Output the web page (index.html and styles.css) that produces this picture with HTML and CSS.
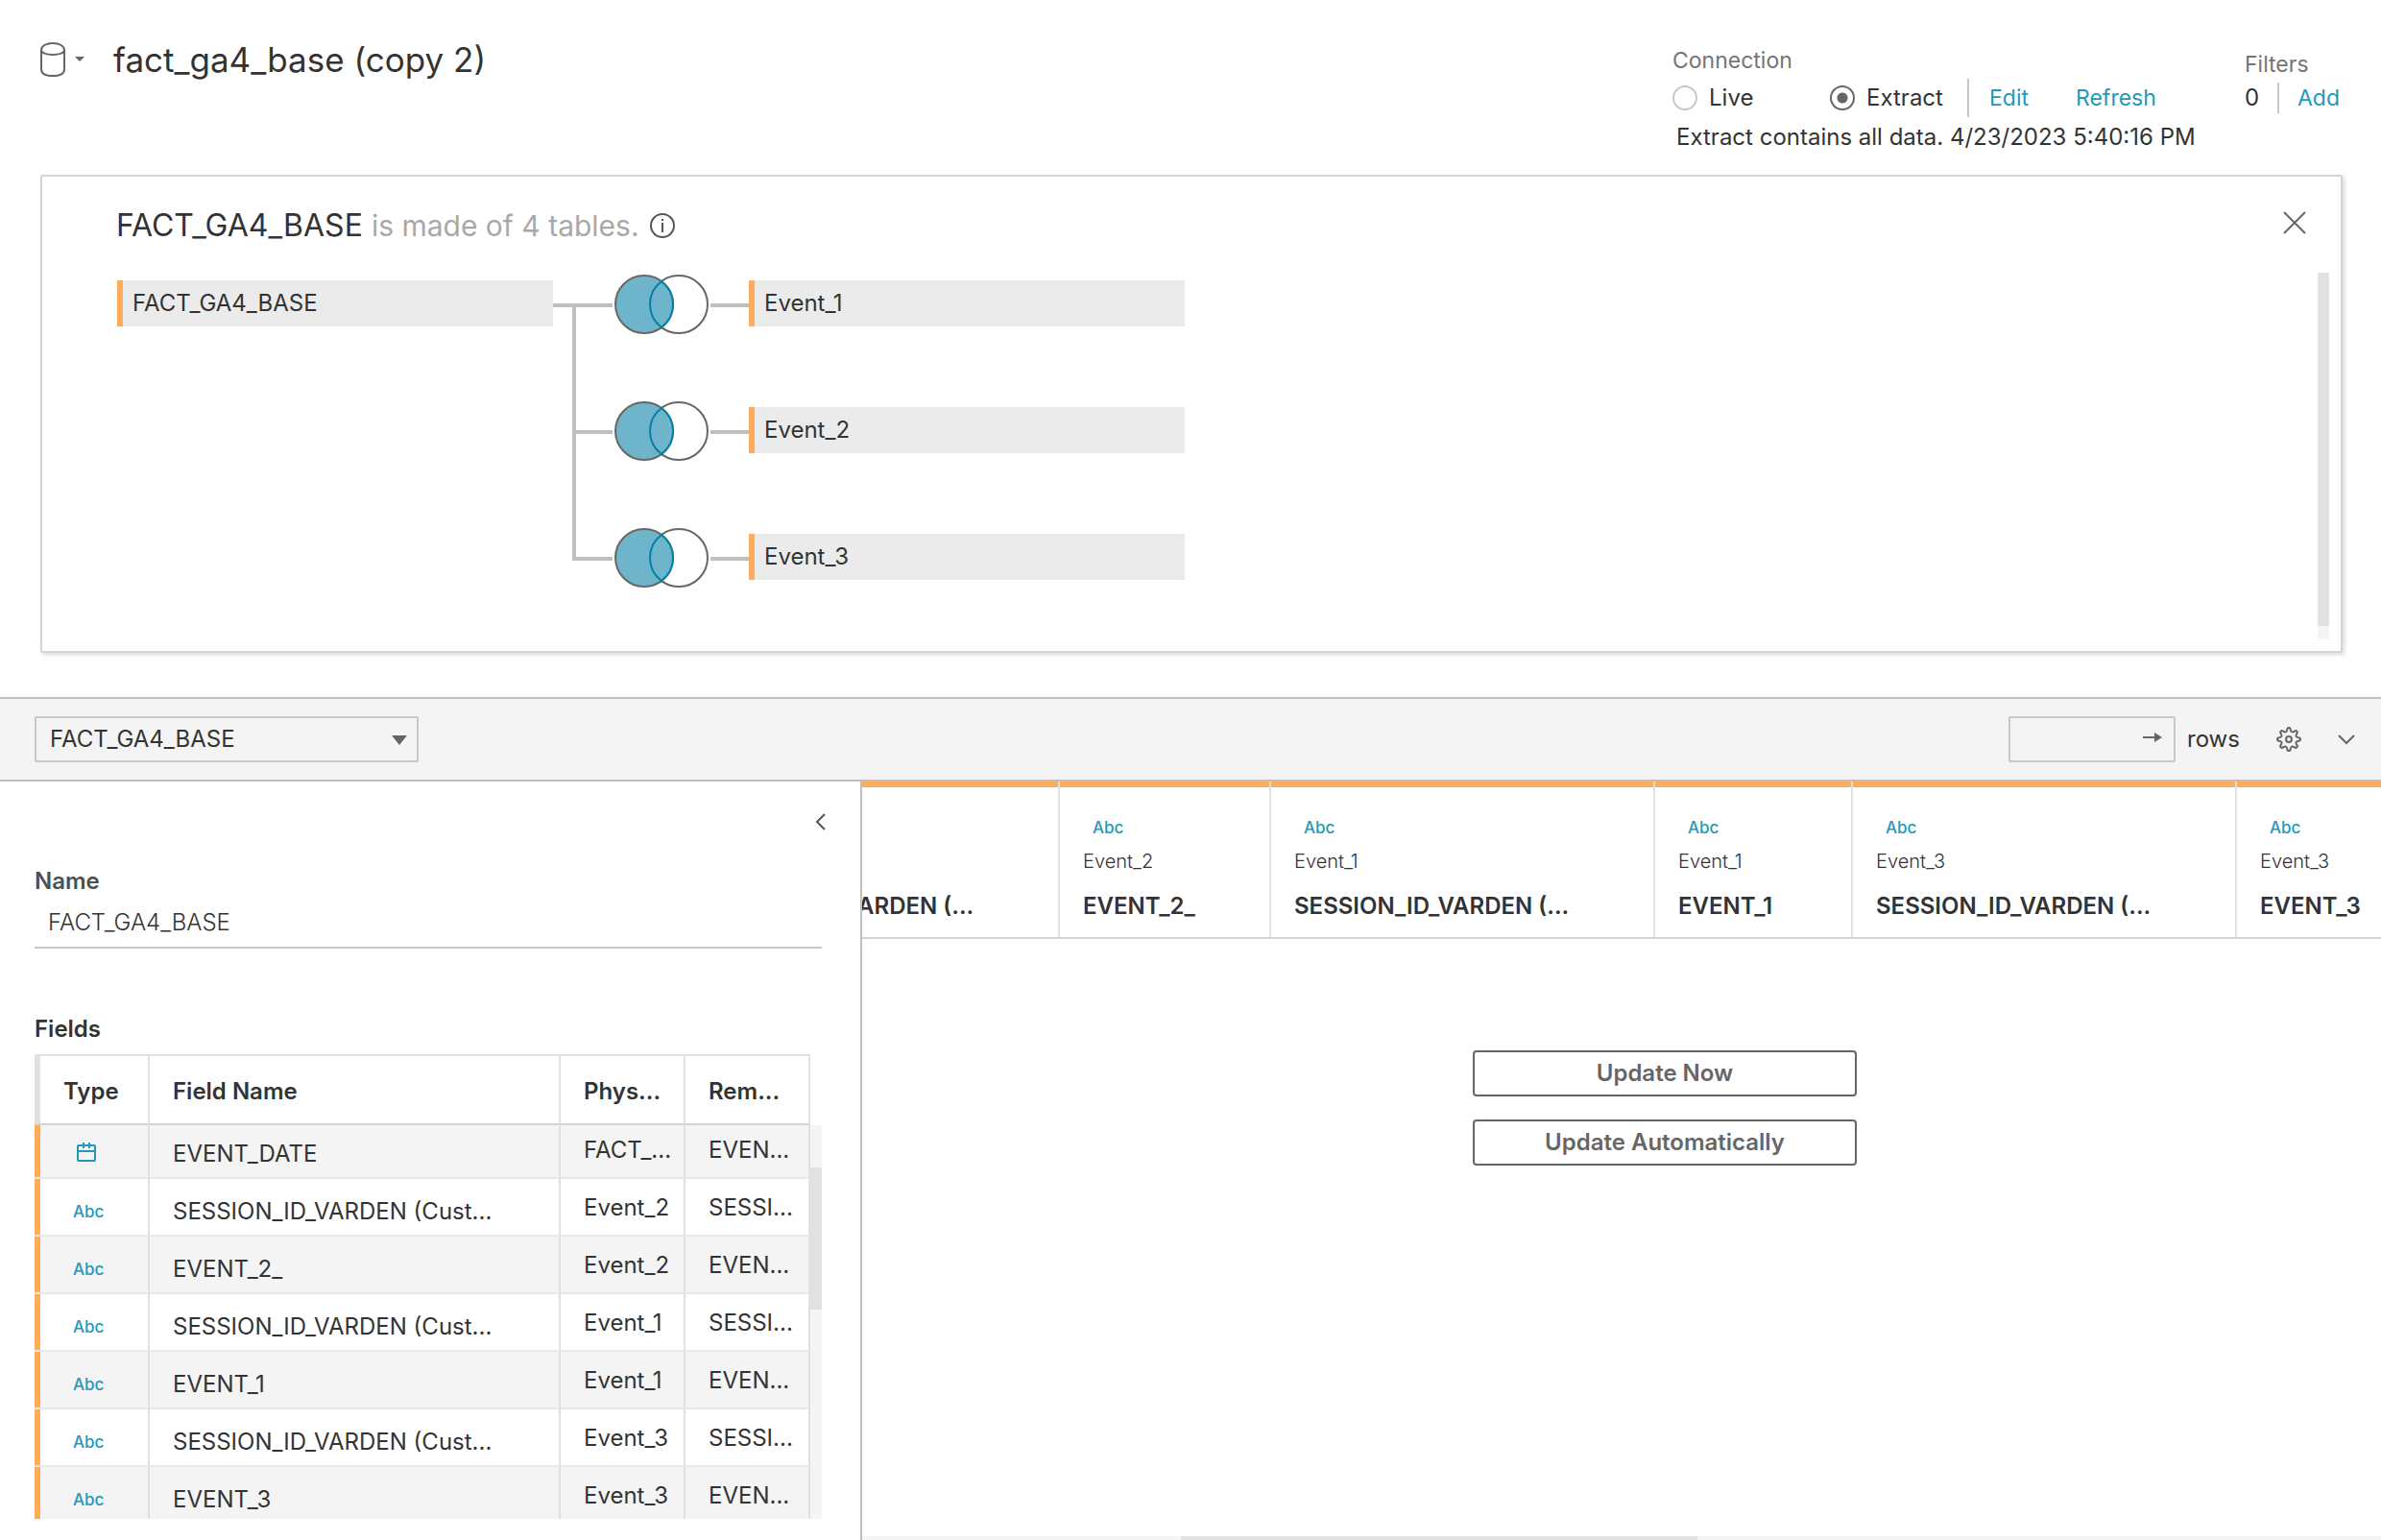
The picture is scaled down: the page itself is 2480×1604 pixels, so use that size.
FILE: index.html
```html
<!DOCTYPE html>
<html lang="en">
<head>
<meta charset="utf-8">
<meta name="viewport" content="width=device-width, initial-scale=1">
<title>fact_ga4_base (copy 2)</title>
<link rel="stylesheet" href="styles.css">
</head>
<body>
<header class="header">
  <button class="source-menu" type="button" aria-label="Data source menu">
    <svg width="48" height="36" viewBox="0 0 48 36" fill="none" stroke="#666" stroke-width="2">
      <path d="M1 8C1 4 6 1 13 1s12 3 12 7v20c0 4-3 7-12 7S1 32 1 28z"/>
      <path d="M1 8c0 3 5 5 12 5s12-2 12-5"/>
      <path d="M36 15h10l-5 5z" fill="#666" stroke="none"/>
    </svg>
  </button>
  <h1 class="title">fact_ga4_base (copy 2)</h1>

  <section class="connection">
    <h2 class="meta-label">Connection</h2>
    <div class="connection-row">
      <label class="mode mode-live"><input type="radio" name="mode" class="radio">Live</label>
      <label class="mode mode-extract"><input type="radio" name="mode" class="radio" checked>Extract</label>
      <span class="divider"></span>
      <a href="#" class="link link-edit">Edit</a>
      <a href="#" class="link">Refresh</a>
    </div>
    <p class="extract-note">Extract contains all data. 4/23/2023 5:40:16 PM</p>
  </section>

  <section class="filters">
    <h2 class="meta-label">Filters</h2>
    <div class="filters-row">
      <span>0</span>
      <span class="divider divider-short"></span>
      <a href="#" class="link">Add</a>
    </div>
  </section>
</header>

<section class="join-panel">
  <div class="join-head">
    <h2 class="join-title">FACT_GA4_BASE <span class="muted">is made of 4 tables.</span></h2>
    <svg class="info" width="28" height="28" viewBox="0 0 28 28" fill="none" stroke="#555" stroke-width="2">
      <circle cx="14" cy="14" r="12"/>
      <path d="M14 11v10M14 7v2"/>
    </svg>
    <button class="close" type="button" aria-label="Close">
      <svg width="24" height="24" viewBox="0 0 24 24" stroke="#666" stroke-width="2"><path d="M1 1l22 22M23 1L1 23"/></svg>
    </button>
  </div>
  <div class="join-body">
    <div class="node">FACT_GA4_BASE</div>
    <svg class="joins" width="204" height="312" viewBox="0 0 204 312">
      <g stroke="#bfbfbf" stroke-width="4" fill="none">
        <path d="M0 26h62M22 24v268M20 158h42M20 290h42M164 26h40M164 158h40M164 290h40"/>
      </g>
      <g id="venn">
        <circle cx="131" cy="25" r="30" fill="#fff" stroke="#666" stroke-width="2"/>
        <circle cx="95" cy="25" r="30" fill="#6eb5cb" stroke="#666" stroke-width="2"/>
        <path d="M113 1a30 30 0 0 1 0 48a30 30 0 0 1 0-48z" fill="#6eb5cb" stroke="#0080a3" stroke-width="2"/>
      </g>
      <use href="#venn" y="132"/>
      <use href="#venn" y="264"/>
    </svg>
    <div class="joined">
      <div class="node">Event_1</div>
      <div class="node">Event_2</div>
      <div class="node">Event_3</div>
    </div>
    <div class="vscroll"><div class="vscroll-thumb"></div></div>
  </div>
</section>

<div class="toolbar">
  <div class="select-wrap">
    <select class="table-select" aria-label="Table"><option>FACT_GA4_BASE</option></select>
    <svg class="select-caret" width="16" height="10" viewBox="0 0 16 10"><path d="M0 0h16l-8 10z" fill="#666"/></svg>
  </div>
  <div class="rows-wrap">
    <input class="rows-input" id="rows" type="text">
    <svg class="rows-arrow" width="20" height="12" viewBox="0 0 20 12"><path d="M0 5h12V1l8 5-8 5V7H0z" fill="#666"/></svg>
  </div>
  <label class="rows-label" for="rows">rows</label>
  <button class="icon-button gear" type="button" aria-label="Settings">
    <svg width="26" height="26" viewBox="0 0 26 26" fill="none" stroke="#666" stroke-width="2" stroke-linejoin="round">
      <path d="M11.3 2.8A1.7 1.7 0 0 1 14.7 2.8Q15.4 7.2 19 4.6A1.7 1.7 0 0 1 21.4 7Q18.8 10.6 23.2 11.3A1.7 1.7 0 0 1 23.2 14.7Q18.8 15.4 21.4 19A1.7 1.7 0 0 1 19 21.4Q15.4 18.8 14.7 23.2A1.7 1.7 0 0 1 11.3 23.2Q10.6 18.8 7 21.4A1.7 1.7 0 0 1 4.6 19Q7.2 15.4 2.8 14.7A1.7 1.7 0 0 1 2.8 11.3Q7.2 10.6 4.6 7A1.7 1.7 0 0 1 7 4.6Q10.6 7.2 11.3 2.8z"/>
      <circle cx="13" cy="13" r="3"/>
    </svg>
  </button>
  <button class="icon-button" type="button" aria-label="Collapse">
    <svg width="18" height="11" viewBox="0 0 18 11" fill="none" stroke="#666" stroke-width="2"><path d="M1 1l8 8 8-8"/></svg>
  </button>
</div>

<main class="main">
  <aside class="details">
    <button class="collapse" type="button" aria-label="Hide details">
      <svg width="12" height="18" viewBox="0 0 12 18" fill="none" stroke="#555" stroke-width="2"><path d="M11 1L3 9l8 8"/></svg>
    </button>
    <label class="details-label name-label" for="table-name">Name</label>
    <input class="name-input" id="table-name" type="text" value="FACT_GA4_BASE">
    <h3 class="details-label">Fields</h3>
    <div class="fields">
      <table class="fields-table">
        <colgroup><col class="c-type"><col class="c-name"><col class="c-phys"><col class="c-rem"></colgroup>
        <thead><tr><th>Type</th><th>Field Name</th><th>Phys...</th><th>Rem...</th></tr></thead>
        <tbody>
          <tr class="scrolled"><td class="type"><svg class="cal" width="20" height="20" viewBox="0 0 20 20" fill="none" stroke="#2399b9" stroke-width="2"><rect x="1" y="3" width="18" height="16" rx="1"/><path d="M1 9h18M7 0v6M13 0v6"/></svg></td><td class="fname">EVENT_DATE</td><td>FACT_...</td><td>EVEN...</td></tr>
          <tr><td class="type">Abc</td><td class="fname">SESSION_ID_VARDEN (Cust...</td><td>Event_2</td><td>SESSI...</td></tr>
          <tr><td class="type">Abc</td><td class="fname">EVENT_2_</td><td>Event_2</td><td>EVEN...</td></tr>
          <tr><td class="type">Abc</td><td class="fname">SESSION_ID_VARDEN (Cust...</td><td>Event_1</td><td>SESSI...</td></tr>
          <tr><td class="type">Abc</td><td class="fname">EVENT_1</td><td>Event_1</td><td>EVEN...</td></tr>
          <tr><td class="type">Abc</td><td class="fname">SESSION_ID_VARDEN (Cust...</td><td>Event_3</td><td>SESSI...</td></tr>
          <tr><td class="type">Abc</td><td class="fname">EVENT_3</td><td>Event_3</td><td>EVEN...</td></tr>
        </tbody>
      </table>
      <div class="fields-scroll"><div class="fields-thumb"></div></div>
    </div>
  </aside>

  <section class="preview">
    <table class="preview-table">
      <colgroup><col class="wide"><col class="mid"><col class="wide"><col class="narrow"><col class="wide"><col class="narrow"></colgroup>
      <thead>
        <tr>
          <th><span class="column">SESSION_ID_VARDEN (...</span></th>
          <th><span class="abc">Abc</span><span class="source">Event_2</span><span class="column">EVENT_2_</span></th>
          <th><span class="abc">Abc</span><span class="source">Event_1</span><span class="column">SESSION_ID_VARDEN (...</span></th>
          <th><span class="abc">Abc</span><span class="source">Event_1</span><span class="column">EVENT_1</span></th>
          <th><span class="abc">Abc</span><span class="source">Event_3</span><span class="column">SESSION_ID_VARDEN (...</span></th>
          <th><span class="abc">Abc</span><span class="source">Event_3</span><span class="column">EVENT_3</span></th>
        </tr>
      </thead>
    </table>
    <div class="actions">
      <button class="action" type="button">Update Now</button>
      <button class="action" type="button">Update Automatically</button>
    </div>
    <div class="hscroll"><div class="hscroll-thumb"></div></div>
  </section>
</main>
</body>
</html>
```
FILE: styles.css
```css
* { box-sizing: border-box; }

body {
  margin: 0;
  height: 100vh;
  display: flex;
  flex-direction: column;
  overflow: hidden;
  background: #fff;
  color: #333;
  font: 400 24px/24px Inter, "Liberation Sans", sans-serif;
}

h1, h2, h3, p { margin: 0; font-weight: 400; }
button { padding: 0; border: 0; background: none; font: inherit; color: inherit; }
svg { display: block; flex: none; }
input, select { font: inherit; color: inherit; }

/* Header */
.header { display: flex; flex: none; height: 182px; padding: 42px 43px 0 42px; }
.source-menu { height: 40px; margin-right: 28px; }
.title { flex: 1; font-size: 35px; line-height: 40px; }
.meta-label { font-size: 23px; line-height: 24px; color: #757575; }
.connection { display: flex; flex-direction: column; gap: 7px; width: 553px; margin-right: 43px; padding-top: 9px; }
.connection-row { display: flex; align-items: center; height: 40px; }
.mode { display: flex; align-items: center; gap: 12px; }
.mode-live { width: 164px; }
.mode-extract { width: 143px; }
.radio {
  appearance: none;
  width: 26px;
  height: 26px;
  margin: 0;
  border: 2px solid #c8c8c8;
  border-radius: 50%;
}
.radio:checked { border-color: #666; background: radial-gradient(circle, #666 5px, transparent 6px); }
.divider { width: 2px; height: 40px; background: #c8c8c8; }
.divider-short { height: 32px; }
.link { color: #2399b9; font-size: 23px; text-decoration: none; }
.link-edit { width: 90px; margin-left: 21px; }
.extract-note { padding: 2px 0 0 4px; white-space: nowrap; }
.filters { display: flex; flex-direction: column; gap: 7px; width: 99px; padding-top: 13px; }
.filters-row { display: flex; align-items: center; justify-content: space-between; }

/* Join panel */
.join-panel {
  flex: none;
  margin: 0 40px 46px 42px;
  padding: 31px 12px 12px 77px;
  border: 2px solid #d4d4d4;
  border-radius: 2px;
  box-shadow: 2px 2px 4px rgba(0, 0, 0, .15);
}
.join-head { display: flex; align-items: center; height: 40px; margin-bottom: 29px; }
.join-title { font-size: 32px; line-height: 40px; }
.muted { color: #a8a8a8; font-size: 30px; }
.info { margin-left: 10px; }
.close { margin: 0 24px 6px auto; }
.join-body { display: flex; align-items: flex-start; height: 382px; }
.node {
  flex: none;
  width: 454px;
  height: 48px;
  padding-left: 10px;
  border-left: 6px solid #ffab59;
  background: #ebebeb;
  line-height: 48px;
}
.join-body > .node { margin: 8px 0 0 1px; }
.joins { margin-top: 8px; overflow: visible; }
.joined { display: flex; flex-direction: column; gap: 84px; padding-top: 8px; }
.vscroll { align-self: stretch; width: 12px; margin-left: auto; border-radius: 2px; background: #f5f5f5; }
.vscroll-thumb { height: 368px; border-radius: 2px; background: #e1e1e1; }

/* Toolbar */
.toolbar {
  display: flex;
  flex: none;
  align-items: center;
  height: 88px;
  padding: 0 27px 0 36px;
  border: solid #bfbfbf;
  border-width: 2px 0;
  background: #f4f4f4;
}
.select-wrap, .rows-wrap { position: relative; }
.rows-wrap { margin-left: auto; }
.table-select, .rows-input {
  display: block;
  height: 48px;
  border: 2px solid #c8c8c8;
  border-radius: 2px;
  background: transparent;
}
.table-select { appearance: none; width: 400px; padding: 0 12px 0 14px; }
.select-caret { position: absolute; right: 12px; top: 20px; }
.rows-input { width: 174px; padding: 0 40px 0 12px; }
.rows-arrow { position: absolute; right: 14px; top: 16px; }
.rows-label { width: 94px; padding-left: 12px; }
.gear { margin: 0 38px 0 11px; }

/* Details pane */
.main { display: flex; flex: 1; min-height: 0; }
.details {
  display: flex;
  flex: none;
  flex-direction: column;
  width: 898px;
  padding: 33px 40px 22px 36px;
  border-right: 2px solid #bfbfbf;
}
.collapse { align-self: flex-end; height: 18px; margin-right: -4px; }
.details-label { font-weight: 600; font-size: 24px; }
.name-label { margin-top: 41px; color: #4f4f4f; }
.name-input {
  width: 100%;
  height: 58px;
  margin-bottom: 72px;
  padding: 4px 0 0 14px;
  border: 0;
  border-bottom: 2px solid #c8c8c8;
  font-weight: 300;
}
.fields { display: flex; flex: 1; min-height: 0; margin-top: 14px; overflow: hidden; }
.fields-table {
  flex: none;
  width: 808px;
  height: 0;
  table-layout: fixed;
  border-collapse: separate;
  border-spacing: 0;
}
.c-type { width: 120px; }
.c-name { width: 428px; }
.c-phys { width: 130px; }
.c-rem { width: 130px; }
.fields-table th {
  height: 74px;
  padding: 4px 0 0 24px;
  border: solid #e0e0e0;
  border-width: 2px 2px 2px 0;
  border-bottom-color: #d4d4d4;
  font-weight: 600;
  text-align: left;
  white-space: nowrap;
}
.fields-table th:first-child { padding-left: 30px; box-shadow: inset 6px 0 #e0e0e0; }
.fields-table td {
  height: 60px;
  padding: 18px 0 0 24px;
  border: solid #e0e0e0;
  border-width: 0 2px 2px 0;
  border-bottom-color: #e9e9e9;
  vertical-align: top;
  white-space: nowrap;
}
.fields-table .fname { padding-top: 22px; }
.fields-table .type {
  padding: 22px 0 0 40px;
  color: #2399b9;
  font-weight: 500;
  font-size: 17px;
  box-shadow: inset 6px 0 #ffab59;
}
.fields-table tr:nth-child(odd) td { background: #f4f4f4; }
.fields-table .scrolled td { height: 56px; padding-top: 14px; }
.fields-table .scrolled .fname { padding-top: 18px; }
.fields-table .scrolled .type { padding-top: 18px; }
.cal { margin-left: 4px; }
.fields-scroll { width: 12px; margin-top: 74px; padding-top: 44px; background: #f5f5f5; }
.fields-thumb { height: 148px; border-radius: 2px; background: #e1e1e1; }

/* Data preview */
.preview { display: flex; flex: 1; flex-direction: column; min-width: 0; overflow: hidden; }
.preview-table {
  flex: none;
  width: 1832px;
  margin-left: -194px;
  table-layout: fixed;
  border-collapse: separate;
  border-spacing: 0;
}
.wide { width: 400px; }
.mid { width: 220px; }
.narrow { width: 206px; }
.preview-table th {
  height: 164px;
  padding: 0 0 20px 24px;
  border: solid #e0e0e0;
  border-width: 0 2px 2px 0;
  border-bottom-color: #d4d4d4;
  box-shadow: inset 0 6px #ffab59;
  text-align: left;
  vertical-align: bottom;
  white-space: nowrap;
}
.preview-table span { display: block; }
.abc { margin: 0 0 11px 10px; color: #2399b9; font-weight: 500; font-size: 17px; }
.source { margin-bottom: 23px; font-weight: 300; font-size: 20px; }
.column { font-weight: 600; }
.actions {
  display: flex;
  flex: 1;
  flex-direction: column;
  align-items: center;
  gap: 24px;
  padding: 116px 0 0 90px;
}
.action {
  width: 400px;
  height: 48px;
  border: 2px solid #666;
  border-radius: 4px;
  color: #666;
  font-weight: 600;
}
.hscroll { flex: none; height: 4px; background: #f5f5f5; }
.hscroll-thumb { width: 34%; height: 4px; margin-left: 21%; border-radius: 2px 2px 0 0; background: #e1e1e1; }
```
